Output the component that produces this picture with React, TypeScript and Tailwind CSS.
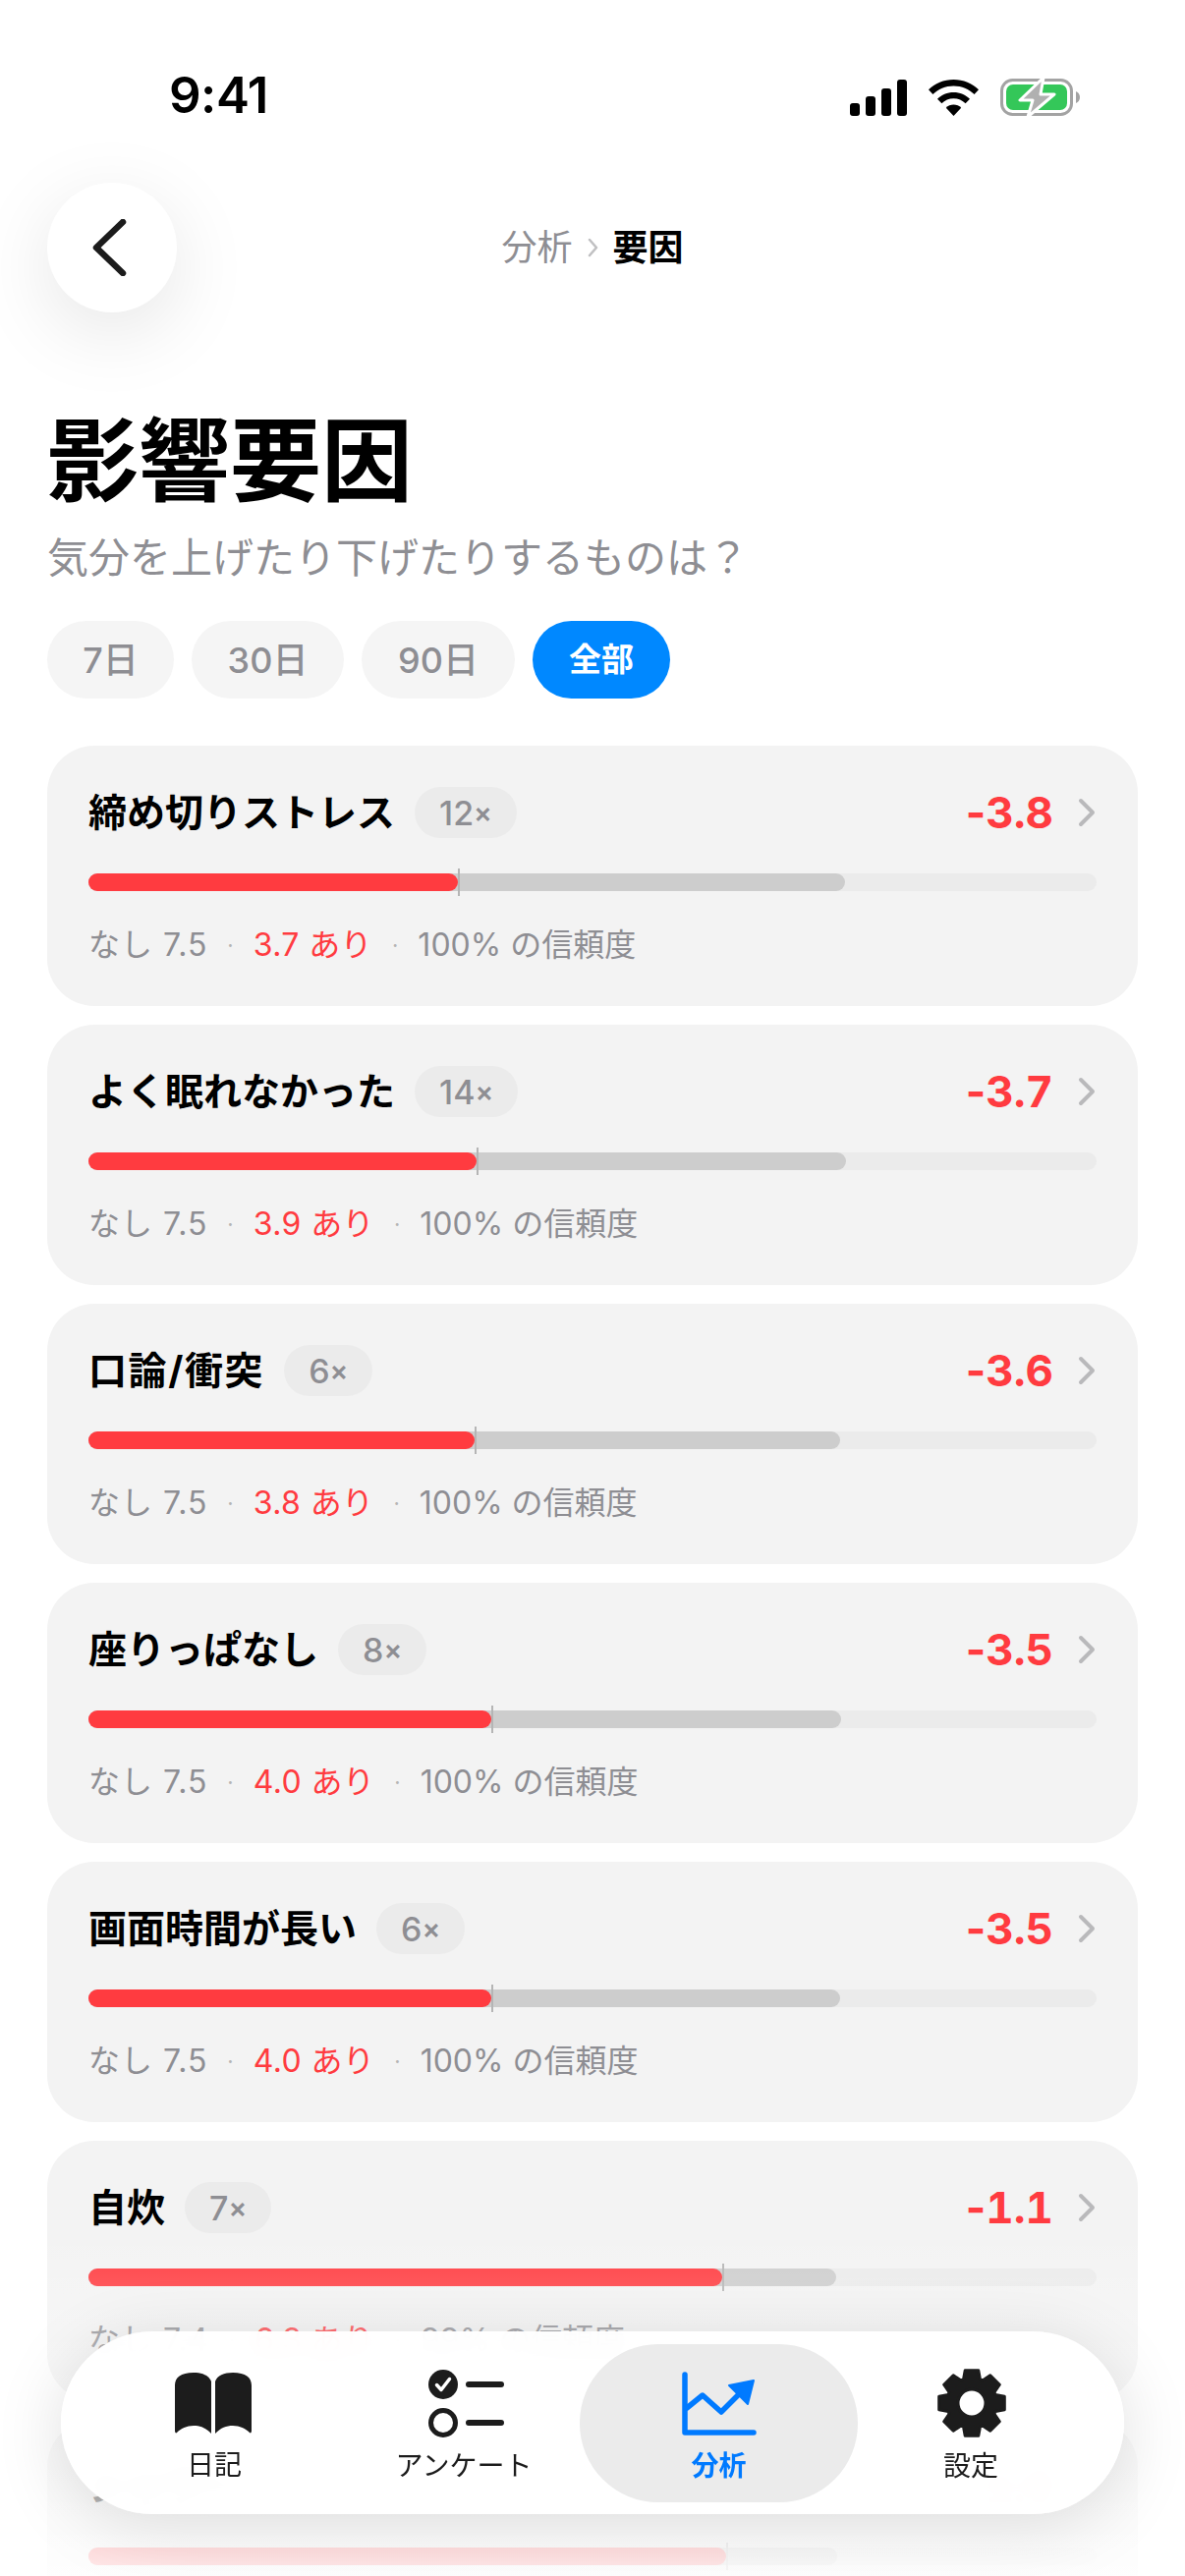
import React from "react";

const fontStack = "font-['Inter','Noto_Sans_CJK_JP',sans-serif]";

interface Factor {
  name: string;
  nameClass?: string;
  count: string;
  delta: string;
  without: string;
  withIt: string;
  confidence: string;
  red: number;
  grey: number;
}

const factors: Factor[] = [
  { name: "締め切りストレス", count: "12", delta: "3.8", without: "7.5", withIt: "3.7", confidence: "100%", red: 376, grey: 770 },
  { name: "よく眠れなかった", count: "14", delta: "3.7", without: "7.5", withIt: "3.9", confidence: "100%", red: 395, grey: 771 },
  { name: "口論/衝突", nameClass: "tracking-[1.6px]", count: "6", delta: "3.6", without: "7.5", withIt: "3.8", confidence: "100%", red: 393, grey: 765 },
  { name: "座りっぱなし", count: "8", delta: "3.5", without: "7.5", withIt: "4.0", confidence: "100%", red: 410, grey: 766 },
  { name: "画面時間が長い", count: "6", delta: "3.5", without: "7.5", withIt: "4.0", confidence: "100%", red: 410, grey: 765 },
  { name: "自炊", count: "7", delta: "1.1", without: "7.4", withIt: "6.3", confidence: "99%", red: 645, grey: 761 },
  { name: "シャワー", count: "9", delta: "1.0", without: "7.4", withIt: "6.4", confidence: "98%", red: 649, grey: 762 },
];

function StatusIcons() {
  return (
    <div className="flex items-center gap-[22px]">
      <svg width="58" height="37" viewBox="0 0 58 37" fill="#000">
        <rect x="0" y="24" width="10" height="13" rx="3" />
        <rect x="16" y="17" width="10" height="20" rx="3" />
        <rect x="32" y="9" width="10" height="28" rx="3" />
        <rect x="48" y="0" width="10" height="37" rx="3" />
      </svg>
      <svg width="51" height="37" viewBox="0 0 51 37" fill="#000">
        <path d="M25.5 0C35.5 0 44.5 3.9 51 10.3L46.6 15C41.2 9.7 33.7 6.4 25.5 6.4S9.800 9.700 4.400 15L0 10.300C6.500 3.900 15.500 0 25.500 0Z" />
        <path d="M25.500 13C32 13 37.800 15.500 42 19.700L37.600 24.300C34.500 21.200 30.200 19.300 25.500 19.300S16.500 21.200 13.400 24.300L9 19.700C13.200 15.500 19 13 25.500 13Z" />
        <path d="M25.500 25.500C28.500 25.500 31.200 26.700 33.200 28.700L25.500 37L17.800 28.700C19.800 26.700 22.500 25.500 25.500 25.500Z" />
      </svg>
      <svg width="82" height="42" viewBox="0 0 82 42">
        <rect x="1.500" y="3.500" width="71" height="35" rx="11" fill="none" stroke="#a3a3a3" strokeWidth="3" />
        <rect x="6" y="8" width="62" height="26" rx="7" fill="#34c759" />
        <path d="M77 15c2.500.8 4 3.200 4 6s-1.500 5.200-4 6z" fill="#a3a3a3" />
        <path d="M44 1L20 24H33L28 41L55 18H41Z" fill="#b0b0b0" stroke="#fff" strokeWidth="3" strokeLinejoin="round" />
      </svg>
    </div>
  );
}

function FactorCard({ factor }: { factor: Factor }) {
  return (
    <div className="h-[265px] shrink-0 rounded-[48px] bg-[#f3f3f3] px-[42px] pt-[42px]">
      <div className="flex h-[52px] items-center">
        <span className={`text-[39px] leading-[52px] font-bold text-black ${factor.nameClass ?? ""}`}>{factor.name}</span>
        <span className="ml-5 flex h-[52px] items-center rounded-full bg-[#ebebeb] px-[25px] text-[34px] font-medium text-[#8e8e93]">
          {factor.count}
          <span className="text-[28px] font-semibold">×</span>
        </span>
        <span className="ml-auto text-[44px] leading-[52px] font-bold text-[#ff3b40]">
          -<span className="tabular-nums">{factor.delta}</span>
        </span>
        <svg className="mr-[1px] ml-[25px]" width="18" height="30" viewBox="0 0 18 30" fill="none" stroke="#b9b9bb" strokeWidth="4" strokeLinecap="round" strokeLinejoin="round">
          <path d="M3 3l12 12L3 27" />
        </svg>
      </div>
      <div className="relative mt-9 h-[18px] rounded-full bg-[#ebebeb]">
        <div className="absolute top-0 left-0 h-full rounded-full bg-[#cdcdcd]" style={{ width: `${(factor.grey / 1026) * 100}%` }} />
        <div className="absolute top-0 left-0 h-full rounded-full bg-[#ff3b40]" style={{ width: `${(factor.red / 1026) * 100}%` }} />
        <div className="absolute top-[-5px] h-[28px] w-[2px] bg-[#b5b5b5]" style={{ left: `${(factor.red / 1026) * 100}%` }} />
      </div>
      <div className="mt-[33px] flex h-[44px] items-center text-[32px] text-[#8e8e93]">
        <span className="tracking-[1px]">なし {factor.without}</span>
        <span className="mx-[20px] text-[22px] text-[#b5b5b5]">·</span>
        <span className="tracking-[0.4px] text-[#ff3b40]">{factor.withIt} あり</span>
        <span className="mx-[20px] text-[22px] text-[#b5b5b5]">·</span>
        <span>{factor.confidence} の信頼度</span>
      </div>
    </div>
  );
}

function gearPath() {
  // 8 teeth around the centre of a 72 box
  const pts: string[] = [];
  for (let i = 0; i < 8; i++) {
    const a = (i * Math.PI) / 4 - Math.PI / 2;
    const p = (r: number, o: number) => {
      const x = 36 + r * Math.cos(a + o);
      const y = 36 + r * Math.sin(a + o);
      return `${x.toFixed(1)} ${y.toFixed(1)}`;
    };
    pts.push(`${i === 0 ? "M" : "L"}${p(25.5, -0.34)}`, `L${p(34, -0.2)}`, `L${p(34, 0.2)}`, `L${p(25.5, 0.34)}`);
  }
  return `${pts.join(" ")}Z M36 22a14 14 0 1 0 0 28a14 14 0 1 0 0-28Z`;
}

function BottomNav() {
  return (
    <div className={`absolute top-[2373px] left-[62px] flex h-[186px] w-[1082px] items-center rounded-[93px] bg-white/95 pl-5 shadow-[0_12px_70px_rgba(0,0,0,0.13)] backdrop-blur-md ${fontStack}`}>
      <div className="flex h-[161px] w-[272px] flex-col items-center pt-7">
        <svg className="mr-[2px]" width="80" height="64" viewBox="0 0 80 64" fill="#1c1c1c">
          <path d="M1 14C1 6 7 1 20 1C29 1 36 4 38 10V63C32 57 27 55 20 55C13 55 7 58 3 62C2 63 1 62 1 60Z" />
          <path d="M79 14C79 6 73 1 60 1C51 1 44 4 42 10V63C48 57 53 55 60 55C67 55 73 58 77 62C78 63 79 62 79 60Z" />
        </svg>
        <span className="mt-[13px] text-[28px] leading-[36px] text-[#1c1c1c]">日記</span>
      </div>
      <div className="flex h-[161px] w-[236px] flex-col items-center pt-[26px]">
        <svg className="ml-[6px]" width="78" height="69" viewBox="0 0 78 69" fill="none">
          <circle cx="15" cy="15" r="15" fill="#1c1c1c" />
          <path d="M8.500 15.500l4.500 5 8.500-11" stroke="#fff" strokeWidth="3.500" strokeLinecap="round" strokeLinejoin="round" />
          <circle cx="15" cy="54" r="12.500" stroke="#1c1c1c" strokeWidth="5" />
          <path d="M41 15h33M41 54h33" stroke="#1c1c1c" strokeWidth="6" strokeLinecap="round" />
        </svg>
        <span className="mt-[11px] text-[28px] leading-[36px] text-[#1c1c1c]">アンケート</span>
      </div>
      <div className="flex h-[161px] w-[283px] flex-col items-center rounded-[80px] bg-[#ebebeb] pt-7">
        <svg width="76" height="66" viewBox="0 0 76 66" fill="none">
          <path d="M3 3V62H73" stroke="#007aff" strokeWidth="5.500" strokeLinecap="round" strokeLinejoin="round" />
          <path d="M5 37L21 24L40 41L58 23" stroke="#007aff" strokeWidth="5.500" strokeLinecap="round" strokeLinejoin="round" />
          <path d="M48 14L73 9L67 33Z" fill="#007aff" stroke="#007aff" strokeWidth="2" strokeLinejoin="round" />
        </svg>
        <span className="mt-[12px] text-[28px] leading-[36px] font-bold text-[#007aff]">分析</span>
      </div>
      <div className="flex h-[161px] w-[230px] flex-col items-center pt-6">
        <svg className="ml-[2px]" width="72" height="72" viewBox="0 0 72 72" fill="#1c1c1c" fillRule="evenodd" stroke="#1c1c1c" strokeWidth="3" strokeLinejoin="round">
          <path d={gearPath()} />
        </svg>
        <span className="mt-[10px] text-[28px] leading-[36px] text-[#1c1c1c]">設定</span>
      </div>
    </div>
  );
}

export default function App() {
  return (
    <div className={`relative h-[2622px] w-[1206px] overflow-hidden bg-white ${fontStack}`}>
      {/* status bar */}
      <div className="flex h-[186px] items-start justify-between pt-[66px] pr-[106px] pl-[172px]">
        <span className="text-[51px] leading-[62px] font-semibold tracking-[-0.5px] text-black">9:41</span>
        <div className="pt-3">
          <StatusIcons />
        </div>
      </div>

      {/* header */}
      <div className="grid grid-cols-[132px_1fr_132px] items-center px-12">
        <button className="flex h-[132px] w-[132px] items-center justify-center rounded-full bg-white shadow-[0_20px_80px_rgba(0,0,0,0.1)]">
          <svg className="mr-[7px]" width="36" height="58" viewBox="0 0 36 58" fill="none" stroke="#1c1c1c" strokeWidth="6.500" strokeLinecap="round" strokeLinejoin="round">
            <path d="M32 3L5 29l27 26" />
          </svg>
        </button>
        <div className="flex items-center justify-center text-[36px]">
          <span className="text-[#8e8e93]">分析</span>
          <svg className="mx-[15px]" width="11" height="22" viewBox="0 0 11 22" fill="none" stroke="#c0c0c2" strokeWidth="2.500" strokeLinecap="round" strokeLinejoin="round">
            <path d="M2 3l7 8-7 8" />
          </svg>
          <span className="font-bold text-black">要因</span>
        </div>
      </div>

      {/* title */}
      <div className="px-[48px]">
        <h1 className="mt-[101px] text-[93px] leading-[100px] font-bold text-black">影響要因</h1>
        <p className="mt-[23px] text-[42px] leading-[52px] text-[#8e8e93]">気分を上げたり下げたりするものは？</p>

        <div className="mt-[38px] flex gap-[18px]">
          <div className="flex h-[79px] w-[129px] items-center justify-center rounded-full bg-[#f5f5f5] text-[36px] font-medium text-[#8e8e93]">7日</div>
          <div className="flex h-[79px] w-[155px] items-center justify-center rounded-full bg-[#f5f5f5] text-[36px] font-medium text-[#8e8e93]">30日</div>
          <div className="flex h-[79px] w-[156px] items-center justify-center rounded-full bg-[#f5f5f5] text-[36px] font-medium text-[#8e8e93]">90日</div>
          <div className="flex h-[79px] w-[140px] items-center justify-center rounded-full bg-[#0088ff] text-[33px] font-semibold text-white">全部</div>
        </div>

        <div className="mt-12 flex flex-col gap-[19px]">
          {factors.map((factor) => (
            <FactorCard key={factor.name} factor={factor} />
          ))}
        </div>
      </div>

      {/* fade over the list */}
      <div className="pointer-events-none absolute inset-x-0 top-[2270px] h-[352px] bg-linear-to-b from-white/0 to-white/90" />

      <BottomNav />
    </div>
  );
}
